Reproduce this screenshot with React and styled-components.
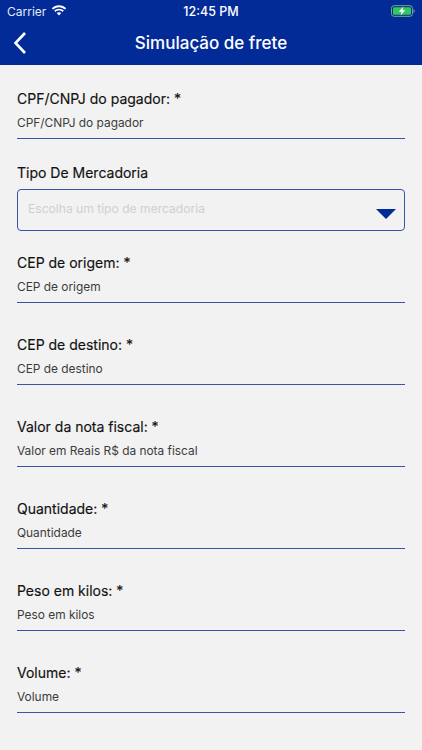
import React from 'react';
import styled, { createGlobalStyle } from 'styled-components';

const GlobalStyle = createGlobalStyle`
  html, body {
    margin: 0;
    padding: 0;
    background: #f2f2f2;
    font-family: 'Inter', 'Liberation Sans', sans-serif;
  }
`;

const Screen = styled.div`
  width: 422px;
  height: 750px;
  overflow: hidden;
  background: #f2f2f2;
`;

const Header = styled.header`
  height: 65px;
  background: #032b97;
  color: #fff;
  display: flex;
  flex-direction: column;
`;

const StatusBar = styled.div`
  height: 22px;
  padding: 0 7px;
  display: grid;
  grid-template-columns: 1fr auto 1fr;
  align-items: center;
  font-size: 12.5px;
  font-weight: 500;
`;

const Carrier = styled.div`
  display: flex;
  align-items: center;
  gap: 5px;
  font-size: 12px;
  font-weight: 400;
  color: #e4e8f5;
`;

const BatteryWrap = styled.div`
  justify-self: end;
  display: flex;
`;

const NavBar = styled.div`
  flex: 1;
  position: relative;
  display: flex;
  align-items: center;
  justify-content: center;
  padding-bottom: 1px;
`;

const BackButton = styled.div`
  position: absolute;
  left: 13px;
  top: 9px;
  display: flex;
`;

const Title = styled.h1`
  margin: 0;
  font-size: 17px;
  font-weight: 500;
`;

const Form = styled.main`
  padding: 25px 17px 0;
  display: flex;
  flex-direction: column;
`;

const Field = styled.div`
  height: ${(p) => p.$height}px;
  display: flex;
  flex-direction: column;
`;

const Label = styled.label`
  font-size: 14px;
  line-height: 18px;
  font-weight: 400;
  color: #111;
  -webkit-text-stroke: 0.15px #111;
`;

const Input = styled.div`
  height: 30px;
  margin-top: 1px;
  box-sizing: border-box;
  border-bottom: 1.5px solid #3a53a6;
  font-size: 11.9px;
  line-height: 27px;
  color: #3c3c3c;
`;

const Select = styled.div`
  height: 41.5px;
  margin-top: 7px;
  box-sizing: border-box;
  border: 1.5px solid #3a53a6;
  border-radius: 4px;
  padding: 0 8px 3px 10px;
  display: flex;
  align-items: center;
  justify-content: space-between;
  font-size: 12.1px;
  color: #cfcfd2;
`;

const Arrow = styled.svg`
  width: 20px;
  height: 10px;
  margin-top: 12px;
`;

const fields = [
  { label: 'CEP de origem: *', placeholder: 'CEP de origem' },
  { label: 'CEP de destino: *', placeholder: 'CEP de destino' },
  { label: 'Valor da nota fiscal: *', placeholder: 'Valor em Reais R$ da nota fiscal' },
  { label: 'Quantidade: *', placeholder: 'Quantidade' },
  { label: 'Peso em kilos: *', placeholder: 'Peso em kilos' },
  { label: 'Volume: *', placeholder: 'Volume' },
];

const Wifi = () => (
  <svg width="16" height="12" viewBox="0 0 16 12" fill="#fff">
    <path d="M8 2.2c2.3 0 4.4.9 6 2.4l1.2-1.3C13.3 1.4 10.8.3 8 .3S2.7 1.4.8 3.3L2 4.6c1.6-1.5 3.7-2.4 6-2.4z" />
    <path d="M8 5.5c1.4 0 2.6.5 3.6 1.4l1.2-1.3C11.5 4.4 9.8 3.7 8 3.7s-3.5.7-4.8 1.9l1.2 1.3c1-.9 2.2-1.4 3.6-1.4z" />
    <path d="M8 7.2c-.9 0-1.7.3-2.3.9L8 10.6l2.3-2.5c-.6-.6-1.4-.9-2.3-.9z" />
  </svg>
);

const Battery = () => (
  <svg width="24" height="12" viewBox="0 0 24 12">
    <rect x="0.5" y="0.7" width="21" height="10.6" rx="2.6" fill="none" stroke="#6fae8c" />
    <rect x="2" y="2.2" width="18" height="7.6" rx="1.3" fill="#34c759" />
    <path d="M22.6 4.2c.7.2 1 .9 1 1.8s-.3 1.6-1 1.8z" fill="#8fa3cf" />
    <path d="M12.4 1.6 7.8 6.7h2.8l-1 3.7 4.6-5.1h-2.8z" fill="#fff" />
  </svg>
);

const App = () => (
  <Screen>
    <GlobalStyle />
    <Header>
      <StatusBar>
        <Carrier>
          Carrier
          <Wifi />
        </Carrier>
        <div>12:45 PM</div>
        <BatteryWrap>
          <Battery />
        </BatteryWrap>
      </StatusBar>
      <NavBar>
        <BackButton>
          <svg width="14" height="24" viewBox="0 0 14 24" fill="none" stroke="#fff" strokeWidth="2.6">
            <path d="M12 2 2.5 12 12 22" />
          </svg>
        </BackButton>
        <Title>Simulação de frete</Title>
      </NavBar>
    </Header>
    <Form>
      <Field $height={74}>
        <Label>CPF/CNPJ do pagador: *</Label>
        <Input>CPF/CNPJ do pagador</Input>
      </Field>
      <Field $height={90}>
        <Label>Tipo De Mercadoria</Label>
        <Select>
          Escolha um tipo de mercadoria
          <Arrow viewBox="0 0 20 10">
            <path d="M0 0h20L10 10z" fill="#032b97" />
          </Arrow>
        </Select>
      </Field>
      {fields.map((field) => (
        <Field key={field.label} $height={82}>
          <Label>{field.label}</Label>
          <Input>{field.placeholder}</Input>
        </Field>
      ))}
    </Form>
  </Screen>
);

export default App;
